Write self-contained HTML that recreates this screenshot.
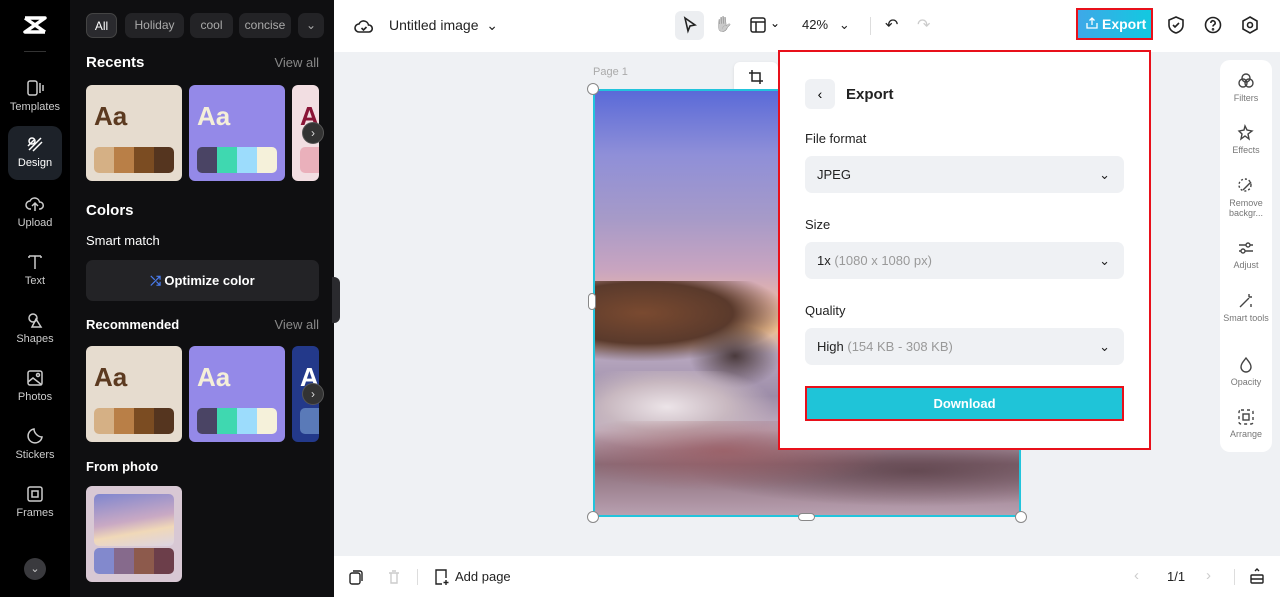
<!DOCTYPE html>
<html><head><meta charset="utf-8"><style>
*{box-sizing:border-box;margin:0;padding:0}
body{width:1280px;height:597px;overflow:hidden;font-family:"Liberation Sans",sans-serif;background:#eff1f4;position:relative}
.abs{position:absolute}
.rail{left:0;top:0;width:70px;height:597px;background:#000}
.rail .it{position:absolute;left:8px;width:54px;height:54px;color:#ccc;font-size:11px;text-align:center}
.rail .it svg{display:block;margin:8px auto 3px}
.panel{left:70px;top:0;width:264px;height:597px;background:#0f0f11;color:#fff}
.chip{position:absolute;top:13px;height:25px;border-radius:7px;background:#232326;color:#aaa;font-size:12px;line-height:25px;text-align:center}
.h{position:absolute;font-size:15px;font-weight:bold}
.va{position:absolute;right:15px;font-size:13px;color:#888}
.card{position:absolute;width:96px;height:96px;border-radius:6px;overflow:hidden}
.card .aa{position:absolute;left:8px;top:16px;font-size:26px;font-weight:bold}
.card .sw{position:absolute;left:8px;top:62px;width:80px;height:26px;border-radius:5px;overflow:hidden;display:flex}
.card .sw i{flex:1}
.nav{position:absolute;width:22px;height:22px;border-radius:50%;background:#333;border:1px solid #555;color:#ddd;font-size:12px;text-align:center;line-height:20px}
.top{left:334px;top:0;width:946px;height:52px;background:#fff}
.bot{left:334px;top:556px;width:946px;height:41px;background:#fff}
.exp{left:778px;top:50px;width:373px;height:400px;background:#fff;border:2px solid #e8101a}
.lbl{position:absolute;left:25px;font-size:13px;color:#222}
.sel{position:absolute;left:25px;width:319px;height:37px;background:#eff1f4;border-radius:7px;font-size:13px;line-height:37px;padding-left:12px;color:#222}
.sel span{color:#999}
.sel b{position:absolute;right:14px;top:0;font-weight:normal}
.tools{left:1220px;top:60px;width:52px;height:392px;background:#fff;border-radius:10px}
.tools .t{position:absolute;left:0;width:52px;text-align:center;font-size:9px;color:#777;line-height:10px}
.tools .t svg{display:block;margin:0 auto 3px}
</style></head><body>
<div class="abs rail">
 <svg class="abs" style="left:22px;top:15px" width="26" height="20" viewBox="0 0 26 20"><path d="M3 3h20L3 17h20M3 3l20 14" stroke="#fff" stroke-width="3.5" fill="none" stroke-linejoin="round"/></svg>
 <div class="abs" style="left:24px;top:51px;width:22px;height:1px;background:#333"></div>
 <div class="it" style="top:70px"><svg width="20" height="20" viewBox="0 0 20 20" fill="none" stroke="#ccc" stroke-width="1.5"><rect x="3" y="3" width="9" height="14" rx="2"/><path d="M15 5v10M18 7v6"/></svg>Templates</div>
 <div class="it" style="top:126px;background:#1d2229;border-radius:10px;color:#fff;height:54px"><svg width="20" height="20" viewBox="0 0 20 20" fill="none" stroke="#fff" stroke-width="1.5"><circle cx="7" cy="7" r="3"/><path d="M4 16l12-12M8 17l9-9M3 12l6-6"/></svg>Design</div>
 <div class="it" style="top:186px"><svg width="20" height="20" viewBox="0 0 20 20" fill="none" stroke="#ccc" stroke-width="1.5"><path d="M6 15H5a4 4 0 010-8 5 5 0 019.5 1A3.5 3.5 0 0115 15h-1M10 17V10M7 12l3-3 3 3"/></svg>Upload</div>
 <div class="it" style="top:244px"><svg width="20" height="20" viewBox="0 0 20 20" fill="none" stroke="#ccc" stroke-width="1.5"><path d="M4 4h12M10 4v13M4 4v2M16 4v2"/></svg>Text</div>
 <div class="it" style="top:302px"><svg width="20" height="20" viewBox="0 0 20 20" fill="none" stroke="#ccc" stroke-width="1.5"><circle cx="8" cy="8" r="4"/><path d="M11 9l5 8H7z"/></svg>Shapes</div>
 <div class="it" style="top:360px"><svg width="20" height="20" viewBox="0 0 20 20" fill="none" stroke="#ccc" stroke-width="1.5"><rect x="3" y="3" width="14" height="14" rx="2"/><path d="M3 14l5-4 9 7"/><circle cx="13" cy="7" r="1.5"/></svg>Photos</div>
 <div class="it" style="top:418px"><svg width="20" height="20" viewBox="0 0 20 20" fill="none" stroke="#ccc" stroke-width="1.5"><path d="M17 11a7 7 0 11-8-8c0 4 4 8 8 8z"/></svg>Stickers</div>
 <div class="it" style="top:476px"><svg width="20" height="20" viewBox="0 0 20 20" fill="none" stroke="#ccc" stroke-width="1.5"><rect x="3" y="3" width="14" height="14" rx="2"/><rect x="7" y="7" width="6" height="6"/></svg>Frames</div>
 <div class="abs" style="left:24px;top:558px;width:22px;height:22px;border-radius:50%;background:#3a3a3e;color:#ccc;font-size:11px;text-align:center;line-height:22px">⌄</div>
</div>
<div class="abs panel">
 <div class="chip" style="left:16px;width:31px;background:#2a2a2e;color:#fff;border:1px solid #444">All</div>
 <div class="chip" style="left:55px;width:59px">Holiday</div>
 <div class="chip" style="left:120px;width:43px">cool</div>
 <div class="chip" style="left:169px;width:52px;overflow:hidden">concise</div>
 <div class="chip" style="left:228px;width:26px">⌄</div>
 <div class="h" style="left:16px;top:54px">Recents</div><div class="va" style="top:55px">View all</div>
 <div class="card" style="left:16px;top:85px;background:#e6dccf"><div class="aa" style="color:#5c3a20">Aa</div><div class="sw"><i style="background:#d5b085"></i><i style="background:#b97f47"></i><i style="background:#7b4c22"></i><i style="background:#55351f"></i></div></div>
 <div class="card" style="left:119px;top:85px;background:#9489e8"><div class="aa" style="color:#f5efd9">Aa</div><div class="sw"><i style="background:#4a4464"></i><i style="background:#3fd8b0"></i><i style="background:#9cdcfc"></i><i style="background:#f5f1da"></i></div></div>
 <div class="card" style="left:222px;top:85px;width:27px;background:#f2dee2"><div class="aa" style="color:#8a1436">Aa</div><div class="sw" style="background:#eab0bb"></div></div>
 <div class="nav" style="left:232px;top:122px">›</div>
 <div class="h" style="left:16px;top:202px">Colors</div>
 <div class="abs" style="left:16px;top:233px;font-size:13px">Smart match</div>
 <div class="abs" style="left:16px;top:260px;width:233px;height:41px;background:#232326;border-radius:7px;text-align:center;line-height:41px;font-size:13px;font-weight:bold"><span style="color:#4a7df0">⤮</span> Optimize color</div>
 <div class="h" style="left:16px;top:317px;font-size:13px">Recommended</div><div class="va" style="top:317px">View all</div>
 <div class="card" style="left:16px;top:346px;background:#e6dccf"><div class="aa" style="color:#5c3a20">Aa</div><div class="sw"><i style="background:#d5b085"></i><i style="background:#b97f47"></i><i style="background:#7b4c22"></i><i style="background:#55351f"></i></div></div>
 <div class="card" style="left:119px;top:346px;background:#9489e8"><div class="aa" style="color:#f5efd9">Aa</div><div class="sw"><i style="background:#4a4464"></i><i style="background:#3fd8b0"></i><i style="background:#9cdcfc"></i><i style="background:#f5f1da"></i></div></div>
 <div class="card" style="left:222px;top:346px;width:27px;background:#23398a"><div class="aa" style="color:#fff">Aa</div><div class="sw" style="background:#5a7ab8"></div></div>
 <div class="nav" style="left:232px;top:383px">›</div>
 <div class="h" style="left:16px;top:459px;font-size:13px">From photo</div>
 <div class="card" style="left:16px;top:486px;background:#d8c8d4"><div class="abs" style="left:8px;top:8px;width:80px;height:52px;border-radius:5px;background:linear-gradient(170deg,#7f86cf,#c9a9c4 50%,#f0d8b8 70%,#dcd4e4)"></div><div class="sw"><i style="background:#8289cd"></i><i style="background:#866a8c"></i><i style="background:#8d5a4c"></i><i style="background:#6c3e4a"></i></div></div>
 <div class="abs" style="left:262px;top:277px;width:8px;height:46px;background:#2a2a2e;border-radius:0 6px 6px 0"></div>
</div>
<div class="abs top">
 <svg class="abs" style="left:20px;top:16px" width="20" height="20" viewBox="0 0 20 20" fill="none" stroke="#222" stroke-width="1.6"><path d="M6 16H5a4 4 0 010-8 5 5 0 019.5 1A3.5 3.5 0 0115 16z"/><path d="M7.5 12l2 2 3-3"/></svg>
 <div class="abs" style="left:55px;top:17px;font-size:14px;color:#222">Untitled image &nbsp;⌄</div>
 <div class="abs" style="left:341px;top:11px;width:29px;height:29px;background:#eceef1;border-radius:6px"></div>
 <svg class="abs" style="left:347px;top:16px" width="18" height="18" viewBox="0 0 18 18" fill="none" stroke="#222" stroke-width="1.6"><path d="M4 2l10 7-5 1-2 5z"/></svg>
 <div class="abs" style="left:380px;top:15px;font-size:15px;filter:grayscale(1)">✋</div>
 <svg class="abs" style="left:416px;top:17px" width="16" height="16" viewBox="0 0 16 16" fill="none" stroke="#222" stroke-width="1.5"><rect x="1" y="1" width="14" height="14" rx="2"/><path d="M1 5h14M6 5v10"/></svg>
 <div class="abs" style="left:436px;top:16px;font-size:12px">⌄</div>
 <div class="abs" style="left:468px;top:17px;font-size:13px;color:#222">42% &nbsp;&nbsp;⌄</div>
 <div class="abs" style="left:536px;top:17px;width:1px;height:18px;background:#ddd"></div>
 <div class="abs" style="left:551px;top:15px;font-size:16px;color:#222">↶</div>
 <div class="abs" style="left:583px;top:15px;font-size:16px;color:#ccc">↷</div>
 <div class="abs" style="left:742px;top:8px;width:77px;height:32px;border:2px solid #e8101a;background:linear-gradient(90deg,#3ea8e8,#12c9e0);color:#fff;font-size:14px;font-weight:bold;line-height:28px;padding-left:24px">Export</div>
 <svg class="abs" style="left:752px;top:17px" width="12" height="12" viewBox="0 0 12 12" fill="none" stroke="#fff" stroke-width="1.3"><path d="M1 6v5h10V6M6 8V1M3.5 3.5L6 1l2.5 2.5"/></svg>
 <svg class="abs" style="left:833px;top:16px" width="18" height="18" viewBox="0 0 18 18" fill="none" stroke="#222" stroke-width="1.6"><path d="M9 1l7 3v5c0 4-3 7-7 8-4-1-7-4-7-8V4z"/><path d="M6 9l2 2 4-4"/></svg>
 <svg class="abs" style="left:870px;top:16px" width="18" height="18" viewBox="0 0 18 18" fill="none" stroke="#222" stroke-width="1.6"><circle cx="9" cy="9" r="7.5"/><path d="M6.8 7a2.2 2.2 0 114 1.2c-.8.6-1.8 1-1.8 2.3"/><circle cx="9" cy="13.3" r=".5"/></svg>
 <svg class="abs" style="left:907px;top:16px" width="18" height="18" viewBox="0 0 18 18" fill="none" stroke="#222" stroke-width="1.6"><path d="M9 1l7 4v8l-7 4-7-4V5z"/><circle cx="9" cy="9" r="2.5"/></svg>
</div>
<div class="abs" style="left:593px;top:66px;font-size:11px;color:#aaa">Page 1</div>
<div class="abs" style="left:734px;top:62px;width:44px;height:32px;background:#fff;border-radius:6px;box-shadow:0 1px 3px rgba(0,0,0,.1)"></div>
<svg class="abs" style="left:748px;top:69px" width="16" height="16" viewBox="0 0 16 16" fill="none" stroke="#222" stroke-width="1.5"><path d="M4 1v11h11M1 4h11v11"/></svg>
<div class="abs" style="left:593px;top:89px;width:428px;height:428px;border:2px solid #22c4dc;overflow:hidden;background:
 linear-gradient(180deg,#5a6ad8 0%,#8f8fd8 15%,#a69ac8 30%,#c8a4c0 42%,#e8b8a8 50%,#f0c090 56%,#b8a8c0 62%,#9c8ca8 72%,#c4b0c0 80%,#8a6c78 88%,#b8a0b0 100%)">
 <div class="abs" style="left:0;top:190px;width:190px;height:80px;background:radial-gradient(ellipse at 25% 40%,#7a4a30,#5a3a2c 45%,transparent 72%)"></div>
 <div class="abs" style="left:90px;top:230px;width:100px;height:70px;background:radial-gradient(ellipse,#4a3a3c,transparent 65%)"></div>
 <div class="abs" style="left:0;top:280px;width:180px;height:80px;background:radial-gradient(ellipse at 40% 45%,#ece4e8,#c8b8c0 40%,transparent 70%)"></div>
 <div class="abs" style="left:0;top:330px;width:428px;height:100px;background:radial-gradient(ellipse at 30% 30%,#9a5a60,transparent 40%),radial-gradient(ellipse at 75% 50%,#5a4048,transparent 50%);opacity:.8"></div>
</div>
<div class="abs" style="left:587px;top:83px;width:12px;height:12px;border-radius:50%;background:#fff;border:1px solid #888"></div>
<div class="abs" style="left:587px;top:511px;width:12px;height:12px;border-radius:50%;background:#fff;border:1px solid #888"></div>
<div class="abs" style="left:1015px;top:511px;width:12px;height:12px;border-radius:50%;background:#fff;border:1px solid #888"></div>
<div class="abs" style="left:588px;top:293px;width:8px;height:17px;border-radius:4px;background:#fff;border:1px solid #888"></div>
<div class="abs" style="left:798px;top:513px;width:17px;height:8px;border-radius:4px;background:#fff;border:1px solid #888"></div>
<div class="abs exp">
 <div class="abs" style="left:25px;top:27px;width:30px;height:30px;background:#eff1f4;border-radius:6px;text-align:center;line-height:30px;font-size:14px">‹</div>
 <div class="abs" style="left:66px;top:34px;font-size:15px;font-weight:bold;color:#222">Export</div>
 <div class="lbl" style="top:79px">File format</div>
 <div class="sel" style="top:104px">JPEG<b>⌄</b></div>
 <div class="lbl" style="top:165px">Size</div>
 <div class="sel" style="top:190px">1x <span>(1080 x 1080 px)</span><b>⌄</b></div>
 <div class="lbl" style="top:251px">Quality</div>
 <div class="sel" style="top:276px">High <span>(154 KB - 308 KB)</span><b>⌄</b></div>
 <div class="abs" style="left:25px;top:334px;width:319px;height:35px;border:2px solid #e8101a;background:#1fc4d8;color:#fff;font-size:13px;font-weight:bold;text-align:center;line-height:31px">Download</div>
</div>
<div class="abs tools">
 <div class="t" style="top:12px"><svg width="18" height="18" viewBox="0 0 18 18" fill="none" stroke="#444" stroke-width="1.4"><circle cx="9" cy="6" r="4"/><circle cx="6" cy="11" r="4"/><circle cx="12" cy="11" r="4"/></svg>Filters</div>
 <div class="t" style="top:64px"><svg width="18" height="18" viewBox="0 0 18 18" fill="none" stroke="#444" stroke-width="1.4"><path d="M8 2l2 4 5 1-4 3 1 5-4-3-4 3 1-5-3-3 5-1z"/></svg>Effects</div>
 <div class="t" style="top:117px"><svg width="18" height="18" viewBox="0 0 18 18" fill="none" stroke="#444" stroke-width="1.4"><circle cx="8" cy="8" r="6" stroke-dasharray="2 2"/><path d="M6 13l8-8"/></svg>Remove backgr...</div>
 <div class="t" style="top:179px"><svg width="18" height="18" viewBox="0 0 18 18" fill="none" stroke="#444" stroke-width="1.4"><path d="M2 6h14M2 12h14"/><circle cx="11" cy="6" r="2" fill="#fff"/><circle cx="6" cy="12" r="2" fill="#fff"/></svg>Adjust</div>
 <div class="t" style="top:232px"><svg width="18" height="18" viewBox="0 0 18 18" fill="none" stroke="#444" stroke-width="1.4"><path d="M3 15l9-9M12 2v3M15 5h-3M14 12v3"/></svg>Smart tools</div>
 <div class="t" style="top:296px"><svg width="18" height="18" viewBox="0 0 18 18" fill="none" stroke="#444" stroke-width="1.4"><path d="M9 2c3 4 5 6 5 9a5 5 0 01-10 0c0-3 2-5 5-9z"/></svg>Opacity</div>
 <div class="t" style="top:348px"><svg width="18" height="18" viewBox="0 0 18 18" fill="none" stroke="#444" stroke-width="1.4"><rect x="2" y="2" width="14" height="14" rx="2" stroke-dasharray="3 3"/><rect x="6" y="6" width="6" height="6"/></svg>Arrange</div>
</div>
<div class="abs bot">
 <svg class="abs" style="left:14px;top:13px" width="16" height="16" viewBox="0 0 16 16" fill="none" stroke="#222" stroke-width="1.4"><rect x="2" y="4" width="10" height="11" rx="2"/><path d="M5 2h7a2 2 0 012 2v8"/></svg>
 <svg class="abs" style="left:53px;top:13px" width="14" height="16" viewBox="0 0 14 16" fill="none" stroke="#ccc" stroke-width="1.4"><path d="M2 4h10M4 4v10h6V4M5 2h4"/></svg>
 <div class="abs" style="left:83px;top:13px;width:1px;height:16px;background:#ddd"></div>
 <svg class="abs" style="left:99px;top:12px" width="16" height="18" viewBox="0 0 16 18" fill="none" stroke="#222" stroke-width="1.4"><path d="M9 16H3V2h10v8M13 12v5M10.5 14.5h5"/></svg>
 <div class="abs" style="left:121px;top:13px;font-size:13px;color:#222">Add page</div>
 <div class="abs" style="left:800px;top:11px;font-size:15px;color:#ccc">‹</div>
 <div class="abs" style="left:833px;top:13px;font-size:13px;color:#222">1/1</div>
 <div class="abs" style="left:872px;top:11px;font-size:15px;color:#ccc">›</div>
 <div class="abs" style="left:900px;top:13px;width:1px;height:16px;background:#ddd"></div>
 <svg class="abs" style="left:915px;top:11px" width="16" height="18" viewBox="0 0 16 18" fill="none" stroke="#222" stroke-width="1.4"><rect x="2" y="8" width="12" height="8" rx="1"/><path d="M2 12h12M6 4l2-2 2 2"/></svg>
</div>
</body></html>
